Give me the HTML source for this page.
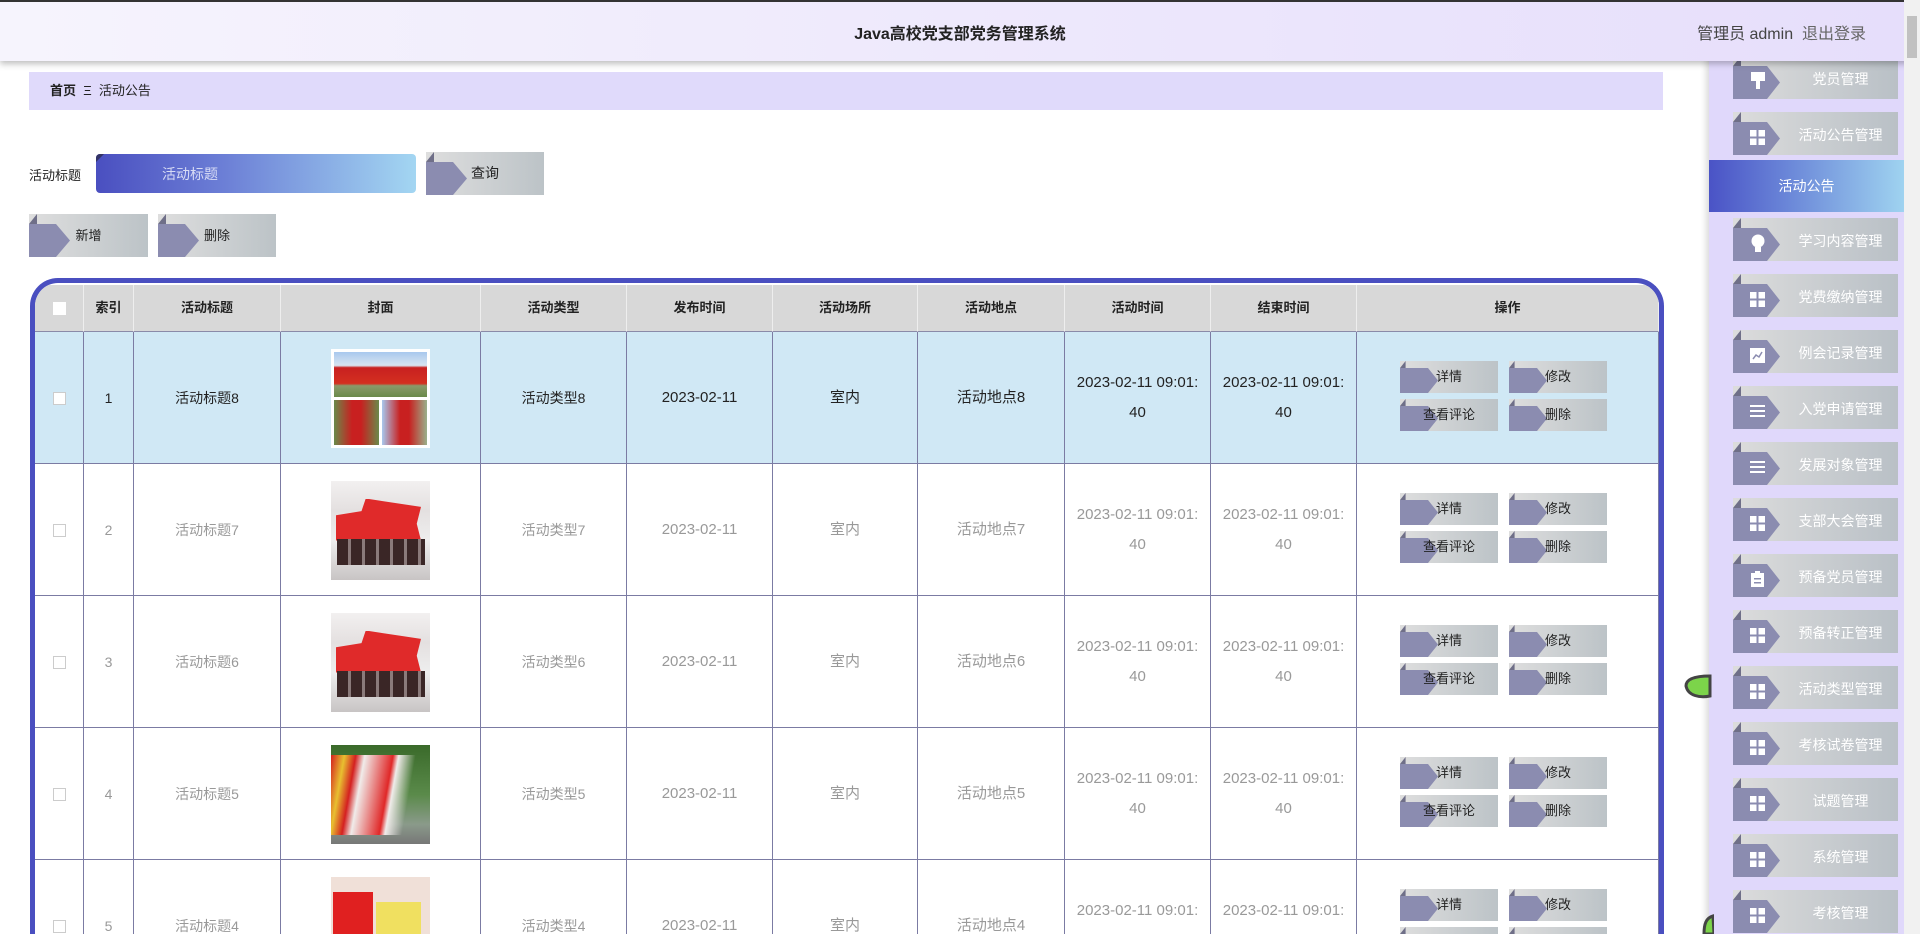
<!DOCTYPE html>
<html><head><meta charset="utf-8">
<style>
*{margin:0;padding:0;box-sizing:border-box}
html{width:1920px;height:934px;overflow:hidden}
body{width:1920px;height:934px;overflow:hidden;background:#fff;font-family:"Liberation Sans","Noto Sans CJK SC",sans-serif;font-size:15px;color:#333;position:relative}
.hdr{position:absolute;left:0;top:0;width:1920px;height:61px;border-top:2px solid #333;background:linear-gradient(90deg,#f6f4fd,#e6defb);box-shadow:0 3px 6px rgba(0,0,0,.25);z-index:5}
.hdr .t{position:absolute;left:0;width:1920px;top:18px;text-align:center;font-weight:bold;font-size:16px;color:#222}
.hdr .u{position:absolute;right:54px;top:18px;font-size:16px;color:#444}
.sb{position:absolute;left:1709px;top:0;width:195px;height:934px;background:#e0d8fb;box-shadow:-3px 0 6px rgba(0,0,0,.15)}
.scroll{position:absolute;left:1904px;top:0;width:16px;height:934px;background:#f1f1f1;z-index:6}
.scroll i{position:absolute;left:3px;top:16px;width:10px;height:42px;background:#c1c1c1}
.mi{position:absolute;left:1733px;width:165px;height:43px;background:linear-gradient(90deg,#dcdcdc,#b9c0c6);color:#fff;font-size:14px;line-height:43px}
.mi span{position:absolute;left:50px;right:0;text-align:center;top:2px}
.arr{position:absolute;left:0;top:0;}
.act{position:absolute;left:1709px;top:160px;width:195px;height:52px;background:linear-gradient(90deg,#4a53c6,#6a86d8 40%,#9fd3f0);color:#fff;text-align:center;line-height:52px;font-size:14px}
.bc{position:absolute;left:29px;top:72px;width:1634px;height:38px;background:#e0dafb;font-size:13px;line-height:38px;padding-left:21px;color:#222}
.btn{position:absolute;background:linear-gradient(90deg,#dedede,#bcc3c7);color:#222;font-size:13px;text-align:center}
.btn b{position:relative;font-weight:normal}
.tbl{position:absolute;left:30px;top:278px;width:1634px;height:656px;border:5px solid #4a4fc0;border-bottom:none;border-radius:28px 28px 0 0;overflow:hidden}
.cell{position:absolute;display:flex;align-items:center;justify-content:center;text-align:center;border-right:1px solid #7b7ba3;line-height:30px}
.hc{background:#d8d8d8;font-weight:bold;font-size:13px;color:#222;border-right:1px solid #eee;border-bottom:1px solid #8a8aa8}
.row{position:absolute;left:0;width:1624px;height:132px;border-bottom:1px solid #7b7ba3}
.cb{width:13px;height:13px;border:1px solid #ccc;background:#fff}
.img{width:99px;height:99px;position:relative;overflow:hidden}
.img div{position:absolute}
</style></head><body>
<div class="hdr"><div class="t">Java高校党支部党务管理系统</div><div class="u">管理员 admin &nbsp;<span style="color:#666">退出登录</span></div></div>

<div class="sb"></div>
<div id="menu"></div>
<div class="act">活动公告</div>
<div class="scroll"><i></i></div>

<div class="bc"><b>首页</b> &nbsp;Ξ&nbsp; 活动公告</div>

<div style="position:absolute;left:29px;top:165px;font-size:13px;color:#222">活动标题</div>
<div style="position:absolute;left:96px;top:154px;width:320px;height:39px;border-radius:4px;background:linear-gradient(90deg,#4a4fc0,#6c7fd6 40%,#a3d6f2);overflow:hidden">
<svg width="60" height="39" style="position:absolute;left:0;top:0"><polygon points="0,0 8,0 0,8" fill="#333366"/></svg>
<span style="position:absolute;left:66px;top:10px;color:#d8dcf5;font-size:14px">活动标题</span></div>

<div id="btns"></div>

<div class="tbl" id="tbl"></div>

<svg style="position:absolute;left:1684px;top:672px" width="30" height="30"><path d="M2,14 C2,6 14,4 26,4 L26,24 C16,26 4,24 2,14Z" fill="#7cd44a" stroke="#444" stroke-width="3"/></svg>
<svg style="position:absolute;left:1702px;top:914px" width="12" height="20"><path d="M11,2 C4,4 2,10 2,20 L12,20Z" fill="#7cd44a" stroke="#444" stroke-width="3"/></svg>

<script>
function shape(w,h,top,pw,pt){return '<svg class="arr" width="'+w+'" height="'+h+'"><polygon points="0,'+top+' '+pw+','+top+' '+pt+','+((top+h)/2)+' '+pw+','+h+' 0,'+h+'" fill="#8b8cb0"/><polygon points="0,'+top+' '+(top*0.8)+',0 '+(top*0.8)+','+top+'" fill="#6f6f88"/></svg>';}
var grid='<svg style="position:absolute;left:17px;top:18px" width="15" height="15"><rect x="0" y="0" width="6.5" height="6.5" fill="#fff"/><rect x="8.5" y="0" width="6.5" height="6.5" fill="#fff"/><rect x="0" y="8.5" width="6.5" height="6.5" fill="#fff"/><rect x="8.5" y="8.5" width="6.5" height="6.5" fill="#fff"/></svg>';
var bulb='<svg style="position:absolute;left:18px;top:16px" width="14" height="19"><circle cx="7" cy="7" r="6.5" fill="#fff"/><rect x="4" y="13" width="6" height="5" fill="#fff"/></svg>';
var brush='<svg style="position:absolute;left:18px;top:16px" width="14" height="19"><rect x="0" y="0" width="14" height="9" fill="#fff"/><rect x="5" y="9" width="4" height="8" fill="#fff"/></svg>';
var lines='<svg style="position:absolute;left:17px;top:19px" width="15" height="12"><rect y="0" width="15" height="2" fill="#fff"/><rect y="5" width="15" height="2" fill="#fff"/><rect y="10" width="15" height="2" fill="#fff"/></svg>';
var chart='<svg style="position:absolute;left:17px;top:18px" width="15" height="15"><rect width="15" height="15" fill="#fff"/><path d="M3,11 L6,7 L9,9 L12,4" stroke="#8b8cb0" stroke-width="1.5" fill="none"/></svg>';
var clip='<svg style="position:absolute;left:18px;top:17px" width="13" height="16"><rect y="2" width="13" height="14" fill="#fff"/><rect x="4" y="0" width="5" height="4" fill="#fff"/><rect x="3" y="7" width="7" height="1.5" fill="#8b8cb0"/><rect x="3" y="11" width="7" height="1.5" fill="#8b8cb0"/></svg>';
var items=[["党员管理",56,brush],["活动公告管理",112,grid],["学习内容管理",218,bulb],["党费缴纳管理",274,grid],["例会记录管理",330,chart],["入党申请管理",386,lines],["发展对象管理",442,lines],["支部大会管理",498,grid],["预备党员管理",554,clip],["预备转正管理",610,grid],["活动类型管理",666,grid],["考核试卷管理",722,grid],["试题管理",778,grid],["系统管理",834,grid],["考核管理",890,grid]];
var h='';items.forEach(function(it){h+='<div class="mi" style="top:'+it[1]+'px">'+shape(165,43,10,34,47)+it[2]+'<span>'+it[0]+'</span></div>';});
document.getElementById('menu').innerHTML=h;
function btn(x,y,w,hh,t,top,pw,pt,fs){return '<div class="btn" style="left:'+x+'px;top:'+y+'px;width:'+w+'px;height:'+hh+'px;line-height:'+hh+'px;font-size:'+fs+'px">'+shape(w,hh,top,pw,pt)+'<b>'+t+'</b></div>';}
var b='';b+=btn(426,152,118,43,'查询',10,27,41,14);b+=btn(29,214,119,43,'新增',10,27,41,13);b+=btn(158,214,118,43,'删除',10,27,41,13);
document.getElementById('btns').innerHTML=b;
var cols=[0,49,99,246,446,592,738,883,1030,1176,1322,1624];
var heads=['','索引','活动标题','封面','活动类型','发布时间','活动场所','活动地点','活动时间','结束时间','操作'];
var hall='<div style="left:0;top:0;width:99px;height:99px;background:linear-gradient(180deg,#f2f0f0,#e4e0e0 30%,#eee 60%,#c8c4c4)"></div><div style="left:5px;top:18px;width:85px;height:42px;background:#e02a2a;clip-path:polygon(0 40%,30% 30%,35% 0,100% 20%,95% 60%,100% 100%,0 100%)"></div><div style="left:6px;top:58px;width:88px;height:26px;background:repeating-linear-gradient(90deg,#3a2626 0 11px,#8a7a7a 11px 14px)"></div>';
var imgs=['<div style="left:0;top:0;width:99px;height:99px;background:#fff"></div><div style="left:3px;top:3px;width:93px;height:45px;background:linear-gradient(180deg,#a8c8ee,#d8e4f0 30%,#c82020 35%,#d43020 70%,#8a9a6a 75%,#6a8a4a)"></div><div style="left:3px;top:51px;width:45px;height:45px;background:linear-gradient(90deg,#6a8a4a,#c82020 40%,#c82020 60%,#6a8a4a)"></div><div style="left:51px;top:51px;width:45px;height:45px;background:linear-gradient(90deg,#a8c8ee,#c82020 40%,#c82020 60%,#9ab08a)"></div>',
hall,hall,
'<div style="left:0;top:0;width:99px;height:99px;background:linear-gradient(180deg,#3a6a2a,#5a8a4a 50%,#8a9a8a 80%,#777)"></div><div style="left:0;top:10px;width:99px;height:80px;background:linear-gradient(100deg,#d42020 0,#e8c030 12%,#d42020 22%,#f0ecea 30%,#e02828 55%,#f0ecea 60%,rgba(255,255,255,0) 75%)"></div>',
'<div style="left:0;top:0;width:99px;height:99px;background:#f0e0d8"></div><div style="left:2px;top:15px;width:40px;height:84px;background:#e02020"></div><div style="left:45px;top:25px;width:45px;height:74px;background:#f0e060"></div>'];
var t='';
for(var i=0;i<heads.length;i++){t+='<div class="cell hc" style="left:'+cols[i]+'px;top:2px;width:'+(cols[i+1]-cols[i])+'px;height:47px">'+(i==0?'<div class="cb" style="border-color:#fff"></div>':heads[i])+'</div>';}
for(var r=0;r<5;r++){var y=49+r*132;var sel=r==0;var col=sel?'#222':'#999';
t+='<div class="row" style="top:'+y+'px;background:'+(sel?'#d0e8f5':'#fff')+'"></div>';
var n=8-r;
var vals=['<div class="cb"></div>',''+(r+1),'活动标题'+n,'<div class="img">'+imgs[r]+'</div>','活动类型'+n,'2023-02-11','室内','活动地点'+n,'2023-02-11 09:01:<br>40','2023-02-11 09:01:<br>40',''];
for(var i=0;i<vals.length;i++){t+='<div class="cell" style="left:'+cols[i]+'px;top:'+y+'px;width:'+(cols[i+1]-cols[i])+'px;height:132px;color:'+col+';font-size:'+(i>=5&&i<=9?15:14)+'px">'+vals[i]+'</div>';}
var bx=1365,by=y+29;
t+=btn(bx,by,98,32,'详情',7,28,38,13)+btn(bx+109,by,98,32,'修改',7,28,38,13)+btn(bx,by+38,98,32,'查看评论',7,28,38,13)+btn(bx+109,by+38,98,32,'删除',7,28,38,13);
}
document.getElementById('tbl').innerHTML=t;
</script>
</body></html>
